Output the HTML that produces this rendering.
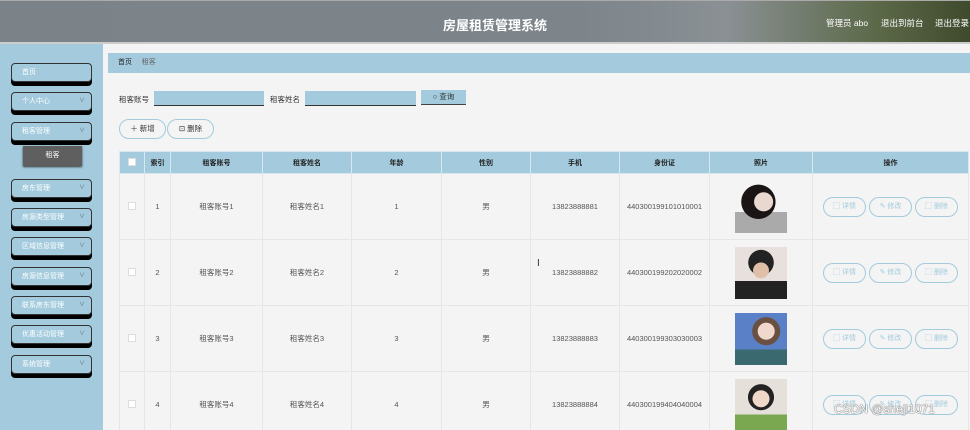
<!DOCTYPE html>
<html><head><meta charset="utf-8"><style>
*{margin:0;padding:0;box-sizing:border-box}
html,body{width:970px;height:430px;overflow:hidden}
body{background:#f4f4f4;font-family:"Liberation Sans","Noto Sans CJK SC",sans-serif;position:relative;font-size:8px;color:#333}
.hdr{position:absolute;left:0;top:0;width:970px;height:44px;background:linear-gradient(90deg,#7b8389 0%,#7d858b 60%,#8a9094 75%,#5d6a4a 90%,#3f4a2c 100%);border-top:1px solid #aaa;border-bottom:2px solid #ccc}
.hdr .t{position:absolute;left:0;width:990px;text-align:center;top:14px;color:#fff;font-weight:bold;font-size:13px}
.hdr .r{position:absolute;top:16px;color:#fff;font-size:8.5px}
.side{position:absolute;left:0;top:44px;width:103px;height:386px;background:#a3cbdd}
.mi{position:absolute;left:11px;width:81px;height:19px;background:#a3cbdd;border:1px solid #333;border-radius:4px;box-shadow:0 4px 0 #000;color:#fff;font-size:7px;line-height:17px;padding-left:10px}
.mi .a{position:absolute;right:6px;top:0;font-size:6px;color:#667}
.sub{position:absolute;left:23px;top:146px;width:59px;height:20px;background:#5f5f5f;color:#fff;font-size:7px;text-align:center;line-height:20px;box-shadow:0 1px 2px #333}
.bc{position:absolute;left:108px;top:53px;width:862px;height:20px;background:#a3cbdd;font-size:7px;line-height:20px;padding-left:10px;color:#333}
.lbl{position:absolute;top:94px;font-size:7.5px;color:#333}
.inp{position:absolute;top:91px;height:15px;background:#a3cbdd;border-bottom:1px solid #333}
.btn{position:absolute;top:90px;left:421px;width:45px;height:15px;background:#a3cbdd;border-bottom:1px solid #444;font-size:7.5px;text-align:center;line-height:14px}
.rb{position:absolute;top:119px;height:20px;border:1.5px solid #a3cbdd;border-radius:10px;font-size:7.5px;text-align:center;line-height:17px;background:#f4f4f4}
table{position:absolute;left:119px;top:151px;border-collapse:collapse;table-layout:fixed}
th{background:#a3cbdd;height:22px;font-size:7px;font-weight:bold;border:1px solid #d8e8f0;color:#222}
td{height:66px;text-align:center;font-size:7.5px;color:#555;border:1px solid #e6e6e6}
.cb{display:inline-block;width:8px;height:8px;border:1px solid #ddd;background:#fff}
.ph{display:inline-block;width:52px;height:52px;vertical-align:middle}
.ab{display:inline-block;width:43px;height:20px;border:1.5px solid #a3cbdd;border-radius:10px;font-size:7px;color:#a3cbdd;line-height:17px;margin:0 1.5px}
.wm{position:absolute;left:834px;top:402px;font-size:12px;color:#fff;text-shadow:0 0 1px #555,0 0 1px #555}
</style></head><body>
<div class="hdr"><div class="t">房屋租赁管理系统</div>
<div class="r" style="left:826px">管理员 abo</div><div class="r" style="left:881px">退出到前台</div><div class="r" style="left:935px">退出登录</div></div>
<div class="side"></div>
<div class="mi" style="top:63px">首页</div>
<div class="mi" style="top:92px">个人中心<span class="a">∨</span></div>
<div class="mi" style="top:122px">租客管理<span class="a">∨</span></div>
<div class="sub">租客</div>
<div class="mi" style="top:179px">房东管理<span class="a">∨</span></div>
<div class="mi" style="top:208px">房源类型管理<span class="a">∨</span></div>
<div class="mi" style="top:237px">区域信息管理<span class="a">∨</span></div>
<div class="mi" style="top:267px">房源信息管理<span class="a">∨</span></div>
<div class="mi" style="top:296px">联系房东管理<span class="a">∨</span></div>
<div class="mi" style="top:325px">优惠活动管理<span class="a">∨</span></div>
<div class="mi" style="top:355px">系统管理<span class="a">∨</span></div>
<div class="bc"><b style="font-weight:normal;color:#222">首页</b> <span style="color:#bbb">&nbsp;/&nbsp;</span> <span style="color:#666">租客</span></div>
<div class="lbl" style="left:119px">租客账号</div><div class="inp" style="left:154px;width:110px"></div>
<div class="lbl" style="left:270px">租客姓名</div><div class="inp" style="left:305px;width:111px"></div>
<div class="btn">○ 查询</div>
<div class="rb" style="left:119px;width:47px">＋ 新增</div>
<div class="rb" style="left:167px;width:47px">⊡ 删除</div>
<table>
<colgroup><col style="width:25px"><col style="width:26px"><col style="width:92px"><col style="width:89px"><col style="width:90px"><col style="width:89px"><col style="width:89px"><col style="width:90px"><col style="width:103px"><col style="width:156px"></colgroup>
<tr><th><span class="cb"></span></th><th>索引</th><th>租客账号</th><th>租客姓名</th><th>年龄</th><th>性别</th><th>手机</th><th>身份证</th><th>照片</th><th>操作</th></tr>
<tr><td><span class="cb"></span></td><td>1</td><td>租客账号1</td><td>租客姓名1</td><td>1</td><td>男</td><td>13823888881</td><td>440300199101010001</td><td><span class="ph" style="background:radial-gradient(circle at 55% 40%,#e8d8d0 0 22%,transparent 23%),radial-gradient(circle at 45% 40%,#1a1514 0 40%,transparent 41%),linear-gradient(#f4f4f4 60%,#aaa 60%)"></span></td><td><span class="ab">▢ 详情</span><span class="ab">✎ 修改</span><span class="ab">▢ 删除</span></td></tr>
<tr><td><span class="cb"></span></td><td>2</td><td>租客账号2</td><td>租客姓名2</td><td>2</td><td>男</td><td>13823888882</td><td>440300199202020002</td><td><span class="ph" style="background:radial-gradient(circle at 50% 45%,#e0bfa8 0 20%,transparent 21%),radial-gradient(circle at 50% 30%,#222 0 28%,transparent 29%),linear-gradient(#e8e0dc 65%,#222 65%)"></span></td><td><span class="ab">▢ 详情</span><span class="ab">✎ 修改</span><span class="ab">▢ 删除</span></td></tr>
<tr><td><span class="cb"></span></td><td>3</td><td>租客账号3</td><td>租客姓名3</td><td>3</td><td>男</td><td>13823888883</td><td>440300199303030003</td><td><span class="ph" style="background:radial-gradient(circle at 60% 35%,#f0d8cc 0 18%,transparent 19%),radial-gradient(circle at 60% 35%,#6a5040 0 30%,transparent 31%),linear-gradient(#5a80c8 70%,#3a6a70 70%)"></span></td><td><span class="ab">▢ 详情</span><span class="ab">✎ 修改</span><span class="ab">▢ 删除</span></td></tr>
<tr><td><span class="cb"></span></td><td>4</td><td>租客账号4</td><td>租客姓名4</td><td>4</td><td>男</td><td>13823888884</td><td>440300199404040004</td><td><span class="ph" style="background:radial-gradient(circle at 50% 38%,#f0d8c8 0 20%,transparent 21%),radial-gradient(circle at 50% 35%,#222 0 30%,transparent 31%),linear-gradient(#e6e0da 68%,#7aa850 68%)"></span></td><td><span class="ab">▢ 详情</span><span class="ab">✎ 修改</span><span class="ab">▢ 删除</span></td></tr>
</table>
<div style="position:absolute;left:537px;top:258px;font-size:10px;color:#333">I</div>
<div class="wm">CSDN @sheji1071</div>
</body></html>
